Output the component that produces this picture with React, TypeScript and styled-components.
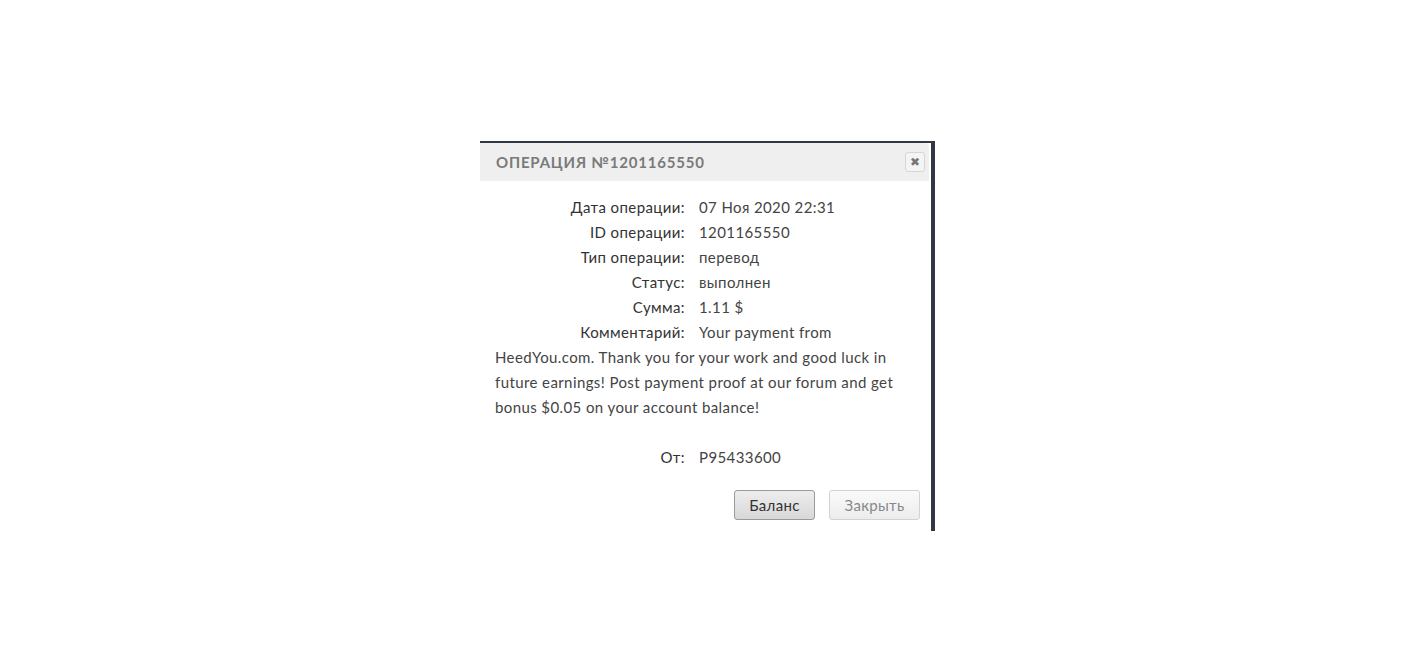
import styled, { createGlobalStyle } from 'styled-components';

const GlobalStyle = createGlobalStyle`
  html, body {
    margin: 0;
    padding: 0;
    background: #fff;
  }
  body {
    font-family: Lato, "Open Sans", sans-serif;
  }
`;

const Page = styled.div`
  width: 1416px;
  height: 672px;
  display: flex;
  justify-content: center;
  align-items: flex-start;
  padding: 141px 1px 0 0;
  box-sizing: border-box;
`;

const Frame = styled.div`
  display: flex;
  background: #323843;
  padding: 2px 4px 0 0;
  height: 390px;
  box-sizing: border-box;
`;

const Dialog = styled.div`
  width: 449px;
  padding-right: 2px;
  background: #fff;
  display: flex;
  flex-direction: column;
`;

const Header = styled.div`
  height: 38px;
  background: #efefef;
  border-top-right-radius: 4px;
  display: flex;
  align-items: center;
  justify-content: space-between;
  padding: 0 4px 0 16px;
`;

const Title = styled.div`
  font-size: 15px;
  font-weight: 700;
  letter-spacing: 0.8px;
  color: #7a7a7a;
  text-transform: uppercase;
`;

const CloseBox = styled.button`
  width: 20px;
  height: 20px;
  padding: 0;
  border: 1px solid #d6d6d6;
  border-radius: 3px;
  background: #f4f4f4;
  color: #777;
  font-size: 12px;
  line-height: 18px;
  display: flex;
  align-items: center;
  justify-content: center;
`;

const Body = styled.div`
  padding: 14px 15px 0 15px;
  font-size: 15px;
  line-height: 25px;
  letter-spacing: 0.4px;
  color: #444;
`;

const Row = styled.div`
  min-height: 25px;
`;

const Label = styled.span`
  display: inline-block;
  width: 190px;
  text-align: right;
  margin-right: 14px;
  color: #333;
`;

const Spacer = styled.div`
  height: 25px;
`;

const Footer = styled.div`
  display: flex;
  justify-content: flex-end;
  gap: 14px;
  padding: 20px 9px 0 0;
`;

const Button = styled.button<{ $primary?: boolean }>`
  height: 30px;
  padding: 0;
  width: ${(p) => (p.$primary ? '81px' : '91px')};
  border-radius: 3px;
  font-family: Lato, "Open Sans", sans-serif;
  font-size: 15px;
  letter-spacing: 0.3px;
  border: 1px solid ${(p) => (p.$primary ? '#9a9a9a' : '#d2d2d2')};
  color: ${(p) => (p.$primary ? '#333' : '#888')};
  background: ${(p) =>
    p.$primary
      ? 'linear-gradient(#ededed, #d8d8d8)'
      : 'linear-gradient(#fafafa, #ececec)'};
`;

const rows: [string, string][] = [
  ['Дата операции:', '07 Ноя 2020 22:31'],
  ['ID операции:', '1201165550'],
  ['Тип операции:', 'перевод'],
  ['Статус:', 'выполнен'],
  ['Сумма:', '1.11 $'],
  [
    'Комментарий:',
    'Your payment from HeedYou.com. Thank you for your work and good luck in future earnings! Post payment proof at our forum and get bonus $0.05 on your account balance!',
  ],
];

export default function App() {
  return (
    <>
      <GlobalStyle />
      <Page>
        <Frame>
          <Dialog>
            <Header>
              <Title>Операция №1201165550</Title>
              <CloseBox>✖</CloseBox>
            </Header>
            <Body>
              {rows.map(([label, value]) => (
                <Row key={label}>
                  <Label>{label}</Label>
                  {value}
                </Row>
              ))}
              <Spacer />
              <Row>
                <Label>От:</Label>
                P95433600
              </Row>
            </Body>
            <Footer>
              <Button $primary>Баланс</Button>
              <Button>Закрыть</Button>
            </Footer>
          </Dialog>
        </Frame>
      </Page>
    </>
  );
}
